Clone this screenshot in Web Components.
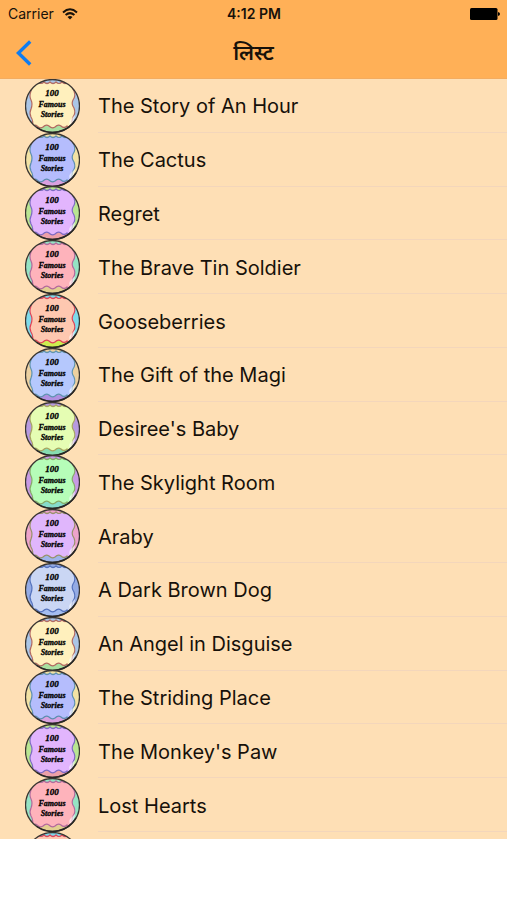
<!DOCTYPE html>
<html lang="hi">
<head>
<meta charset="utf-8">
<meta name="viewport" content="width=device-width, initial-scale=1">
<title>लिस्ट</title>
<style>
    body {
        margin: 0;
        background: #fff;
        color: #17110a;
        font-family: Inter, "Noto Sans", sans-serif;
    }
</style>
</head>
<body>
<story-app>
    <status-bar slot="top" carrier="Carrier" time="4:12 PM"></status-bar>
    <nav-bar slot="top">लिस्ट</nav-bar>
    <story-row badge="cream">The Story of An Hour</story-row>
    <story-row badge="blue">The Cactus</story-row>
    <story-row badge="violet">Regret</story-row>
    <story-row badge="pink">The Brave Tin Soldier</story-row>
    <story-row badge="peach">Gooseberries</story-row>
    <story-row badge="sky">The Gift of the Magi</story-row>
    <story-row badge="lime">Desiree's Baby</story-row>
    <story-row badge="green">The Skylight Room</story-row>
    <story-row badge="orchid">Araby</story-row>
    <story-row badge="ice">A Dark Brown Dog</story-row>
    <story-row badge="cream">An Angel in Disguise</story-row>
    <story-row badge="blue">The Striding Place</story-row>
    <story-row badge="violet">The Monkey's Paw</story-row>
    <story-row badge="pink">Lost Hearts</story-row>
    <story-row badge="peach" peek></story-row>
</story-app>

<script>
// page shell: orange bars on top, the list, an empty strip below
const template_app = document.createElement("template");
template_app.innerHTML = `
<header><slot name="top"></slot></header>
<main role="list"><slot></slot></main>
<footer></footer>

<style>
    :host {
        display: flex;
        flex-direction: column;
        min-height: 100vh;
    }
    header {
        background: #ffb057;
        border-bottom: 1px solid #f3ac60;
    }
    main {
        flex: 1;
        display: flex;
        flex-direction: column;
        background: #fedfb5;
    }
    footer {
        height: 61px;
    }
</style>
`;

class StoryApp extends HTMLElement {
    constructor() {
        super();
        this.attachShadow({ mode: "open" });
        this.shadowRoot.appendChild(template_app.content.cloneNode(true));
    }
}
customElements.define("story-app", StoryApp);

// carrier, clock, battery
const template_status = document.createElement("template");
template_status.innerHTML = `
<div class="left">
    <span class="carrier"></span>
    <svg width="16" height="12" viewBox="0 0 16 12" fill="none" stroke="#17110a" stroke-width="2" aria-hidden="true">
        <path d="M1 4.4 Q8 -1.8 15 4.4"/>
        <path d="M3.6 7.1 Q8 3.2 12.4 7.1"/>
        <path d="M8 11.6 L5.5 9 Q8 6.8 10.5 9 Z" fill="#17110a" stroke="none"/>
    </svg>
</div>
<b class="time"></b>
<svg class="battery" width="30" height="12" viewBox="0 0 30 12" aria-hidden="true">
    <rect width="27.5" height="12" rx="1.5"/>
    <path d="M28 4 Q30 4.4 30 6 Q30 7.6 28 8 Z"/>
</svg>

<style>
    :host {
        display: grid;
        grid-template-columns: 1fr auto 1fr;
        align-items: center;
        height: 27px;
        padding: 0 7px 0 8px;
        font-size: 14px;
    }
    .left {
        display: flex;
        align-items: center;
        gap: 8px;
    }
    .time {
        font-weight: 600;
    }
    .battery {
        justify-self: end;
    }
</style>
`;

class StatusBar extends HTMLElement {
    constructor() {
        super();
        this.attachShadow({ mode: "open" });
        this.shadowRoot.appendChild(template_status.content.cloneNode(true));
    }

    connectedCallback() {
        this.shadowRoot.querySelector(".carrier").textContent = this.getAttribute("carrier");
        this.shadowRoot.querySelector(".time").textContent = this.getAttribute("time");
    }
}
customElements.define("status-bar", StatusBar);

// back button and title
const template_nav = document.createElement("template");
template_nav.innerHTML = `
<button type="button" aria-label="Back">
    <svg width="16" height="26" viewBox="0 0 16 26" fill="none" stroke="#0f7cf0" stroke-width="3.4" aria-hidden="true">
        <path d="M14.2 1.5 L2.4 13 L14.2 24.5"/>
    </svg>
</button>
<h1><slot></slot></h1>

<style>
    :host {
        display: grid;
        grid-template-columns: 1fr auto 1fr;
        align-items: center;
        height: 51px;
    }
    button {
        justify-self: start;
        display: flex;
        border: 0;
        padding: 0 16px;
        background: none;
        cursor: pointer;
    }
    h1 {
        margin: 0;
        font-size: 21px;
        line-height: 28px;
        font-weight: 600;
    }
</style>
`;

class NavBar extends HTMLElement {
    constructor() {
        super();
        this.attachShadow({ mode: "open" });
        this.shadowRoot.appendChild(template_nav.content.cloneNode(true));
    }

    connectedCallback() {
        this.shadowRoot.querySelector("button").onclick = () => history.back();
    }
}
customElements.define("nav-bar", NavBar);

// round badge; panel, side, bottom and wave colours for each look
const BADGES = {
    cream:  ["#fff0bd", "#abc6e6", "#a8e0a0", "#b26a62"],
    blue:   ["#b5bdfd", "#f2e2a4", "#d9a0e0", "#5d8fb0"],
    violet: ["#e2b5fd", "#b9e592", "#eda0a8", "#7e6bc4"],
    pink:   ["#feb3bb", "#95e3c4", "#e2cf90", "#b36a9c"],
    peach:  ["#fec8b0", "#7fdaea", "#cdee50", "#e04358"],
    sky:    ["#b5c8fd", "#ecd0a0", "#b08fe0", "#5f94b0"],
    lime:   ["#e5fdb3", "#b79ae0", "#86dcb0", "#a8a560"],
    green:  ["#b6fdb8", "#c79ae4", "#86dccb", "#87ab68"],
    orchid: ["#e0b6fc", "#eda3cb", "#9db4ea", "#98926a"],
    ice:    ["#cad6f4", "#94abe4", "#a4bdf0", "#5472bd"]
};

const template_badge = document.createElement("template");
template_badge.innerHTML = `
<svg width="55" height="54" viewBox="0 0 55 54">
    <clipPath id="disc"><ellipse cx="27.5" cy="27" rx="27" ry="26.5"/></clipPath>
    <g clip-path="url(#disc)">
        <rect class="side" width="55" height="54"/>
        <path class="bottom" d="M9 46 H46 L49 54 H6 Z"/>
        <path class="panel" d="M7 3 Q10 6 13 3 Q16 6 19 3 Q22 6 25 3 Q28 6 31 3 Q34 6 37 3 Q40 6 43 3 Q46 6 48 3
            Q46 8 49 12 Q51 17 48 21 Q46 25 49 29 Q51 34 48 38 Q46 43 48 47
            Q45 50 42 47 Q39 50 36 47 Q33 45 30 48 Q27 50 24 47 Q21 45 18 48 Q15 50 12 47 Q10 45 7 48
            Q9 43 6 38 Q4 34 6 30 Q8 25 6 21 Q4 17 6 12 Q8 8 7 3 Z"/>
        <path d="M50 36 L49 43 L45 46 Q43 43 46 40 Z" fill="#fff" opacity=".6"/>
    </g>
    <ellipse cx="27.5" cy="27" rx="27" ry="26.5" fill="none" stroke="#3a3632" stroke-width="1.3"/>
    <path d="M51 40 A27 26.5 0 0 1 12 48.5" fill="none" stroke="#292725" stroke-width="1.5"/>
    <g class="label" text-anchor="middle">
        <text x="27" y="17" class="number">100</text>
        <text x="27" y="28">Famous</text>
        <text x="27" y="38">Stories</text>
    </g>
</svg>

<style>
    :host {
        display: block;
        height: 54px;
    }
    svg {
        display: block;
    }
    .side { fill: var(--side); }
    .bottom { fill: var(--bottom); }
    .panel { fill: var(--panel); stroke: var(--wave); stroke-width: 1.2; }
    text {
        font: italic bold 8px "Liberation Serif", serif;
        fill: #000;
        stroke: #000;
        stroke-width: .3;
    }
    .number {
        font-size: 9px;
    }
</style>
`;

class StoryBadge extends HTMLElement {
    constructor() {
        super();
        this.attachShadow({ mode: "open" });
        this.shadowRoot.appendChild(template_badge.content.cloneNode(true));
    }

    connectedCallback() {
        const colours = BADGES[this.getAttribute("look")];
        ["--panel", "--side", "--bottom", "--wave"].forEach((name, i) => {
            this.style.setProperty(name, colours[i]);
        });
        if (this.hasAttribute("blank")) this.shadowRoot.querySelector(".label").remove();
    }
}
customElements.define("story-badge", StoryBadge);

// one row of the list; a row with "peek" only shows the top of its badge
const template_row = document.createElement("template");
template_row.innerHTML = `
<story-badge></story-badge>
<div class="title"><slot></slot></div>

<style>
    :host {
        flex: 1 0 53px;
        display: flex;
        align-items: center;
        gap: 18px;
        padding-left: 25px;
        height: 53px;
        font-size: 20px;
    }
    :host([peek]) {
        flex: 0 0 7px;
        align-items: flex-start;
        height: 7px;
        overflow: hidden;
    }
    .title {
        flex: 1;
        align-self: stretch;
        display: flex;
        align-items: center;
        padding-top: 2px;
        border-bottom: 1px solid #f3d6bb;
    }
    :host([peek]) .title {
        border: 0;
    }
</style>
`;

class StoryRow extends HTMLElement {
    constructor() {
        super();
        this.attachShadow({ mode: "open" });
    }

    connectedCallback() {
        const row = template_row.content.cloneNode(true);
        const badge = row.querySelector("story-badge");
        badge.setAttribute("look", this.getAttribute("badge"));
        badge.toggleAttribute("blank", this.hasAttribute("peek"));
        this.shadowRoot.appendChild(row);
        this.setAttribute("role", "listitem");
    }
}
customElements.define("story-row", StoryRow);
</script>
</body>
</html>
